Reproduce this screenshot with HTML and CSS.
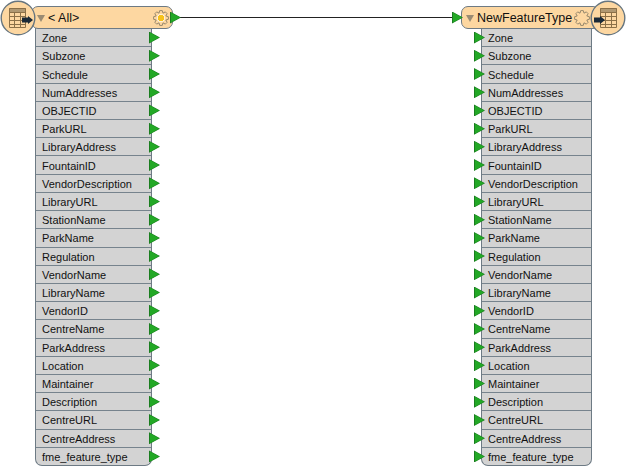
FILE: index.html
```html
<!DOCTYPE html>
<html lang="en">
<head>
<meta charset="utf-8">
<title>Workspace</title>
<link rel="stylesheet" href="styles.css">
</head>
<body>
<svg class="defs" width="0" height="0" aria-hidden="true">
  <symbol id="gear" viewBox="-8 -8 16 16">
    <polygon points="7.39,-1.3 7.39,1.3 4.8,1.99 6.14,4.3 4.3,6.14 1.99,4.8 1.3,7.39 -1.3,7.39 -1.99,4.8 -4.3,6.14 -6.14,4.3 -4.8,1.99 -7.39,1.3 -7.39,-1.3 -4.8,-1.99 -6.14,-4.3 -4.3,-6.14 -1.99,-4.8 -1.3,-7.39 1.3,-7.39 1.99,-4.8 4.3,-6.14 6.14,-4.3 4.8,-1.99" fill="none" stroke="#8c8068" stroke-width="0.9" stroke-linejoin="round"/>
  </symbol>
  <symbol id="table" viewBox="0 0 36 36">
    <circle cx="18" cy="18" r="16.800" fill="#fdd7a1" stroke="#66757f" stroke-width="1.400"/>
    <rect x="9" y="8" width="17" height="4" fill="#b09872"/>
    <path d="M9.500 8.500h16v19h-16zM9.500 12.500h16M9.500 16.500h16M9.500 20.500h16M9.500 24.500h16M14.500 12.500v15M20.500 12.500v15" fill="none" stroke="#8b7048" stroke-width="1"/>
  </symbol>
</svg>
<main class="canvas">
  <div class="wire"></div>

  <section class="node node-source">
    <header class="head">
      <svg class="badge"><use href="#table"/></svg>
      <span class="arrow-out"></span>
      <span class="tri"></span>
      <span class="name">&lt; All&gt;</span>
      <span class="gear-wrap"><svg class="gear"><use href="#gear"/></svg><span class="gear-core"></span></span>
      <span class="port port-head"></span>
    </header>
    <ul class="rows">
      <li>Zone<span class="port"></span></li>
      <li>Subzone<span class="port"></span></li>
      <li>Schedule<span class="port"></span></li>
      <li>NumAddresses<span class="port"></span></li>
      <li>OBJECTID<span class="port"></span></li>
      <li>ParkURL<span class="port"></span></li>
      <li>LibraryAddress<span class="port"></span></li>
      <li>FountainID<span class="port"></span></li>
      <li>VendorDescription<span class="port"></span></li>
      <li>LibraryURL<span class="port"></span></li>
      <li>StationName<span class="port"></span></li>
      <li>ParkName<span class="port"></span></li>
      <li>Regulation<span class="port"></span></li>
      <li>VendorName<span class="port"></span></li>
      <li>LibraryName<span class="port"></span></li>
      <li>VendorID<span class="port"></span></li>
      <li>CentreName<span class="port"></span></li>
      <li>ParkAddress<span class="port"></span></li>
      <li>Location<span class="port"></span></li>
      <li>Maintainer<span class="port"></span></li>
      <li>Description<span class="port"></span></li>
      <li>CentreURL<span class="port"></span></li>
      <li>CentreAddress<span class="port"></span></li>
      <li>fme_feature_type<span class="port"></span></li>
    </ul>
  </section>

  <section class="node node-dest">
    <header class="head">
      <span class="port port-head"></span>
      <span class="tri"></span>
      <span class="name">NewFeatureType</span>
      <span class="gear-wrap"><svg class="gear"><use href="#gear"/></svg></span>
      <svg class="badge"><use href="#table"/></svg>
      <span class="arrow-out"></span>
    </header>
    <ul class="rows">
      <li>Zone<span class="port"></span></li>
      <li>Subzone<span class="port"></span></li>
      <li>Schedule<span class="port"></span></li>
      <li>NumAddresses<span class="port"></span></li>
      <li>OBJECTID<span class="port"></span></li>
      <li>ParkURL<span class="port"></span></li>
      <li>LibraryAddress<span class="port"></span></li>
      <li>FountainID<span class="port"></span></li>
      <li>VendorDescription<span class="port"></span></li>
      <li>LibraryURL<span class="port"></span></li>
      <li>StationName<span class="port"></span></li>
      <li>ParkName<span class="port"></span></li>
      <li>Regulation<span class="port"></span></li>
      <li>VendorName<span class="port"></span></li>
      <li>LibraryName<span class="port"></span></li>
      <li>VendorID<span class="port"></span></li>
      <li>CentreName<span class="port"></span></li>
      <li>ParkAddress<span class="port"></span></li>
      <li>Location<span class="port"></span></li>
      <li>Maintainer<span class="port"></span></li>
      <li>Description<span class="port"></span></li>
      <li>CentreURL<span class="port"></span></li>
      <li>CentreAddress<span class="port"></span></li>
      <li>fme_feature_type<span class="port"></span></li>
    </ul>
  </section>
</main>
</body>
</html>
```
FILE: styles.css
```css
html, body {
  margin: 0;
  padding: 0;
  background: #fff;
  overflow: hidden;
}

.defs {
  position: absolute;
}

.canvas {
  position: relative;
  width: 627px;
  height: 468px;
  font-family: "Liberation Sans", "Noto Sans", sans-serif;
  color: #111;
}

.wire {
  position: absolute;
  left: 180px;
  top: 17px;
  width: 274px;
  height: 1px;
  background: #222;
}

.node {
  position: absolute;
  top: 6px;
}

.node-source {
  left: 2px;
  width: 179px;
}

.node-dest {
  left: 452px;
  width: 175px;
}

.head {
  position: relative;
  box-sizing: border-box;
  height: 23px;
  display: flex;
  align-items: center;
  background: #fdd7a1;
  border: 1px solid #6d7a84;
  border-radius: 7px;
  font-size: 12.500px;
}

.node-source .head {
  margin-left: 29px;
  margin-right: 8px;
  padding-left: 5px;
}

.node-dest .head {
  margin-left: 9px;
  margin-right: 27px;
  padding-left: 4px;
}

.tri {
  width: 0;
  height: 0;
  margin-top: 1px;
  border-left: 4px solid transparent;
  border-right: 4px solid transparent;
  border-top: 7px solid #9a8b73;
  flex: none;
}

.name {
  margin-left: 3px;
  flex: 1;
  white-space: nowrap;
}

.gear-wrap {
  position: relative;
  display: flex;
  flex: none;
  width: 16px;
  height: 16px;
}

.gear {
  width: 16px;
  height: 16px;
}

.gear-core {
  position: absolute;
  left: 4px;
  top: 4px;
  width: 8px;
  height: 8px;
  border-radius: 50%;
  background: radial-gradient(circle, #f6c21c 0 3px, #fff3df 3.500px);
}

.node-source .gear-wrap {
  margin-right: 3px;
}

.node-dest .gear-wrap {
  margin-right: 9px;
}

.badge {
  position: absolute;
  width: 36px;
  height: 36px;
  top: -7px;
}

.node-source .badge {
  left: -32px;
}

.node-dest .badge {
  right: -27px;
  transform: scaleX(-1);
}

.arrow-out {
  position: absolute;
  width: 11px;
  height: 8px;
  top: 9px;
  background: #1b2a38;
  clip-path: polygon(0 20%, 55% 20%, 55% 0, 100% 50%, 55% 100%, 55% 80%, 0 80%);
}

.node-source .arrow-out {
  left: -10px;
}

.node-dest .arrow-out {
  right: -6px;
}

.rows {
  list-style: none;
  margin: 0;
  padding: 0;
  box-sizing: border-box;
  height: 438px;
  display: grid;
  grid-template-rows: repeat(24, 1fr);
  margin-top: -1px;
  background: #d3d3d3;
  border: 1px solid #6d7a84;
  border-top: none;
  border-radius: 0 0 7px 7px;
  font-size: 11px;
}

.node-source .rows {
  margin-left: 33px;
  margin-right: 29px;
}

.node-dest .rows {
  margin-left: 29px;
  margin-right: 35px;
}

.rows li {
  position: relative;
  display: flex;
  align-items: center;
  padding-left: 6px;
  padding-top: 1px;
  border-top: 1px solid #76838d;
  white-space: nowrap;
}

.rows li:first-child {
  border-top-color: transparent;
}

.port {
  position: absolute;
  width: 11px;
  height: 12px;
  top: 50%;
  margin-top: -6px;
  background: #1a7d1f;
  clip-path: polygon(0 0, 100% 50%, 0 100%);
}

.port::before {
  content: "";
  position: absolute;
  inset: 1px;
  background: #23a826;
  clip-path: polygon(0 0, 100% 50%, 0 100%);
}

.node-source .port {
  right: -9px;
}

.node-dest .port {
  left: -8px;
}

.port-head {
  top: 50%;
}

.node-source .port-head {
  right: -9px;
}

.node-dest .port-head {
  left: -10px;
}
```
